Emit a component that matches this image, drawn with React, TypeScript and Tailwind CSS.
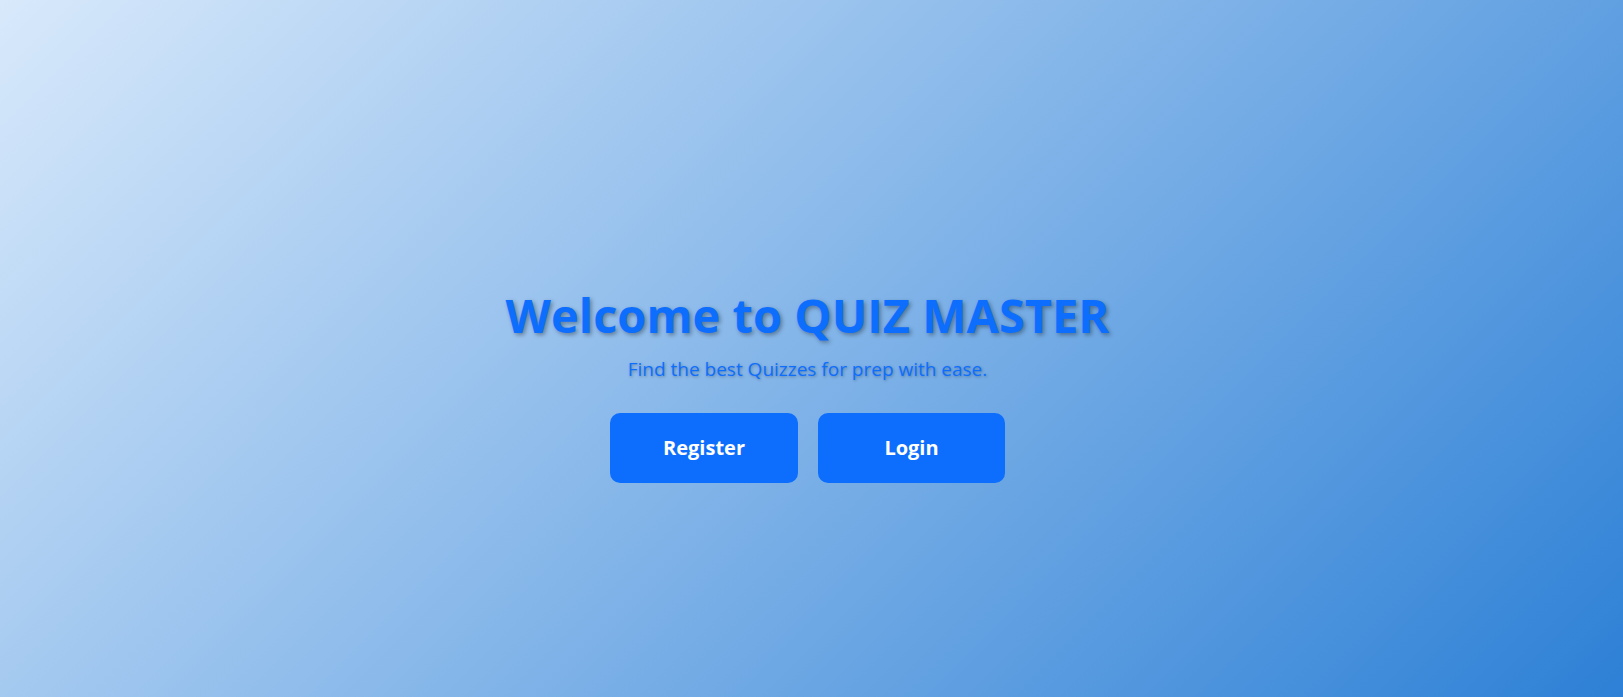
export default function App() {
  return (
    <div
      className="min-h-screen w-full bg-[linear-gradient(135deg,#d8e9fb_0%,#2d80d6_100%)] flex flex-col items-center pt-[287px] pr-[8px]"
      style={{ fontFamily: '"Open Sans", "Noto Sans", sans-serif' }}
    >
      <h1 className="text-[47px] leading-[1.2] font-bold text-[#0d6efd] [text-shadow:2px_2px_4px_rgba(0,0,0,0.35)]">
        Welcome to QUIZ MASTER
      </h1>
      <p className="mt-[12px] text-[19px] text-[#0d6efd] [text-shadow:1px_1px_3px_rgba(0,0,0,0.3)]">
        Find the best Quizzes for prep with ease.
      </p>
      <div className="mt-[29px] flex gap-[20px]">
        <button className="w-[188px] h-[70px] rounded-[10px] bg-[#0d6efd] text-white text-[20px] font-bold">
          Register
        </button>
        <button className="w-[187px] h-[70px] rounded-[10px] bg-[#0d6efd] text-white text-[20px] font-bold">
          Login
        </button>
      </div>
    </div>
  );
}
